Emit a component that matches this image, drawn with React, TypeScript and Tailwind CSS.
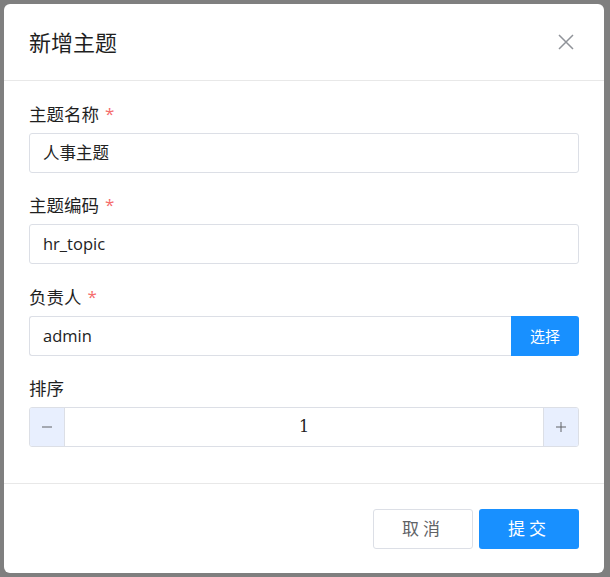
import React, { useState } from 'react';

const font = "font-['Segoe_UI','Open_Sans','Noto_Sans_CJK_SC',sans-serif]";

function Label({ text, required }: { text: string; required?: boolean }) {
  return (
    <div className="h-[22px] leading-[22px] text-[17.5px] text-[#1f1f1f] mb-2 flex items-center">
      <span>{text}</span>
      {required && <span className="ml-[6px] text-[#f56c6c] text-[17px]">*</span>}
    </div>
  );
}

function TextField({ value }: { value: string }) {
  return (
    <div className="h-[40px] border border-[#dcdfe6] rounded-[3px] px-[13px] flex items-center text-[16.5px] text-[#222]">
      {value}
    </div>
  );
}

export default function App() {
  const [sort, setSort] = useState(1);

  return (
    <div className={`w-[610px] h-[577px] bg-[#7f7f7f] pt-[4px] pl-[4px] ${font}`}>
      <div className="w-[600px] h-[569px] bg-white rounded-[6px] flex flex-col">
        {/* Header */}
        <div className="h-[77px] border-b border-[#e8e8e8] flex items-center justify-between pl-[25px] pr-[30px]">
          <span className="text-[22px] text-[#1f1f1f]">新增主题</span>
          <svg width="16" height="16" viewBox="0 0 16 16" className="text-[#909399]">
            <path d="M1 1L15 15M15 1L1 15" stroke="currentColor" strokeWidth="1.5" />
          </svg>
        </div>

        {/* Form */}
        <div className="flex-1 px-[25px] pt-[22px] flex flex-col">
          <div>
            <Label text="主题名称" required />
            <TextField value="人事主题" />
          </div>
          <div className="mt-[21px]">
            <Label text="主题编码" required />
            <TextField value="hr_topic" />
          </div>
          <div className="mt-[22px]">
            <Label text="负责人" required />
            <div className="flex h-[40px]">
              <div className="flex-1 border border-[#dcdfe6] border-r-0 rounded-l-[3px] px-[13px] flex items-center text-[16.5px] text-[#222]">
                admin
              </div>
              <button className="w-[68px] bg-[#1890ff] text-white text-[15px] rounded-r-[3px]">选择</button>
            </div>
          </div>
          <div className="mt-[21px]">
            <Label text="排序" />
            <div className="flex h-[40px] border border-[#dcdfe6] rounded-[3px] overflow-hidden">
              <button
                onClick={() => setSort(sort - 1)}
                className="w-[35px] bg-[#e8effe] border-r border-[#dcdfe6] flex items-center justify-center text-[#606266]"
              >
                <svg width="12" height="12" viewBox="0 0 12 12">
                  <path d="M1 6H11" stroke="currentColor" strokeWidth="1" />
                </svg>
              </button>
              <div className="flex-1 flex items-center justify-center text-[16px] text-[#222] font-['DejaVu_Serif',serif]">
                {sort}
              </div>
              <button
                onClick={() => setSort(sort + 1)}
                className="w-[35px] bg-[#e8effe] border-l border-[#dcdfe6] flex items-center justify-center text-[#606266]"
              >
                <svg width="12" height="12" viewBox="0 0 12 12">
                  <path d="M1 6H11M6 1V11" stroke="currentColor" strokeWidth="1" />
                </svg>
              </button>
            </div>
          </div>
        </div>

        {/* Footer */}
        <div className="h-[90px] border-t border-[#e8e8e8] flex items-center justify-end gap-[6px] pr-[25px]">
          <button className="w-[100px] h-[40px] border border-[#dcdfe6] rounded-[3px] text-[17px] text-[#606266] tracking-[4px]">
            取消
          </button>
          <button className="w-[100px] h-[40px] bg-[#1890ff] rounded-[3px] text-[17px] text-white tracking-[4px]">
            提交
          </button>
        </div>
      </div>
    </div>
  );
}
